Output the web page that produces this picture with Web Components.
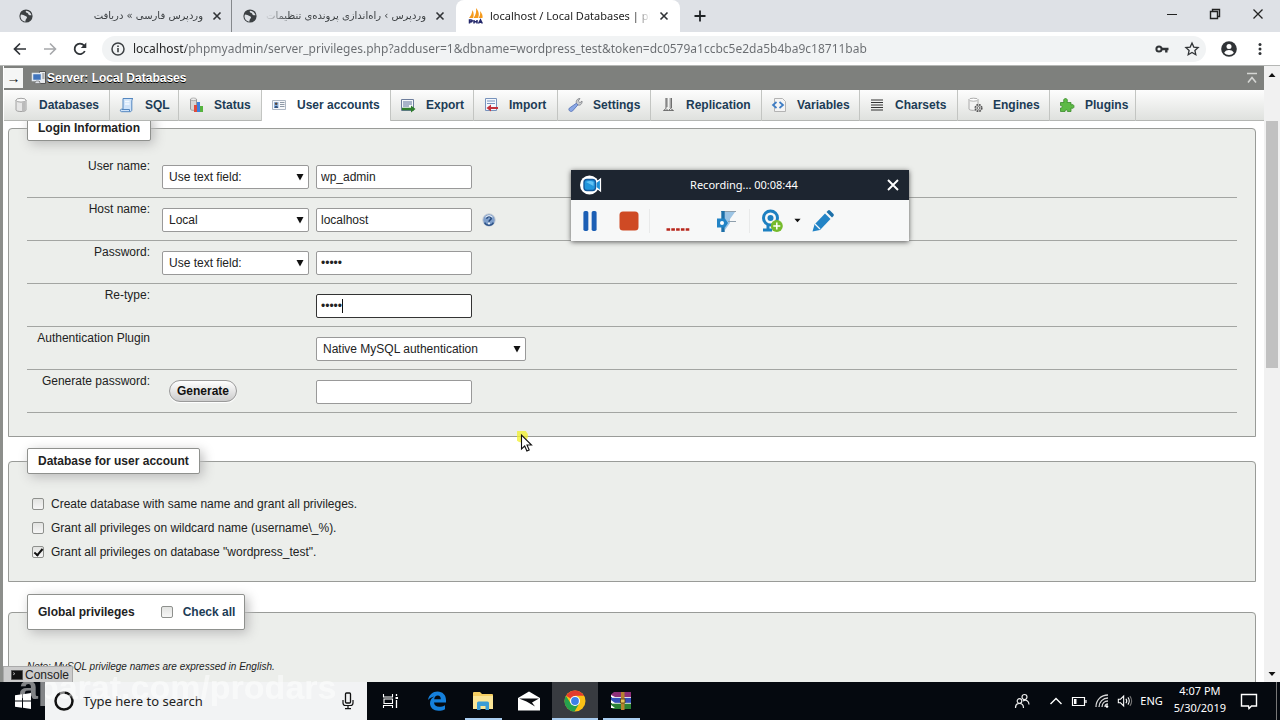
<!DOCTYPE html>
<html lang="en">
<head>
<meta charset="utf-8">
<title>localhost / Local Databases | phpMyAdmin</title>
<style>
html,body{margin:0;height:100%}
body{font:12px/16px "Liberation Sans",Arial,sans-serif;color:#222;overflow:hidden;background:#fff}
</style>
</head>
<body>
<desk-top></desk-top>
<script>
const ICONS = {
  globe:['0 0 16 16','<circle cx="8" cy="8" r="6.6" fill="#3c4043"/><path d="M3 6.5c2 0 3 1 4.500 1.500 1.500.5 2 1.500 1 2.500L7.500 12v1.600C4.500 13.500 2.500 11 2.500 8zM8 2.700c-1 1.300.5 2 1.500 2.300 1 .5.5 1.500 1.500 2s1.500 0 2.500.3C13 5 11 2.800 8 2.700z" fill="#dee1e6"/>'],
  close:['0 0 16 16','<path d="M4.500 4.500l7 7M11.500 4.500l-7 7" stroke="#303336" stroke-width="1.600"/>'],
  plus:['0 0 16 16','<path d="M8 2.500v11M2.500 8h11" stroke="#1f2326" stroke-width="1.800"/>'],
  pma:['0 0 16 16','<path d="M1 10C3 8 4 5 4.500 2 6 5 6 8 5 10zM5.500 10C8 7 8.500 3 8 0c3 3 3.500 7 2 10zM10.500 10c1.500-2 2-4 1.500-7 2 2 3 5 2.500 7z" fill="#f59a1c"/><path d="M1.500 15.500V12H3q1.500 0 1.200 1-.2 1-2.400 1M6 15.500V12M9 15.500V12M6 13.800h3M10.500 15.500l2-3.700 1.800 3.700M11.500 14.300h2.500" stroke="#24286b" stroke-width="1.500" fill="none"/>'],
  min:['0 0 16 16','<path d="M3 8.500h10" stroke="#222" stroke-width="1"/>'],
  restore:['0 0 16 16','<path d="M3.500 5.500h7v7h-7zM5.500 5V3.500h7v7H11" fill="none" stroke="#222" stroke-width="1.400"/>'],
  winclose:['0 0 16 16','<path d="M3.500 3.500l9 9M12.500 3.500l-9 9" stroke="#222" stroke-width="1.300"/>'],
  back:['0 0 16 16','<path d="M14 8H3M8 2.500L2.500 8 8 13.500" fill="none" stroke="#2f3337" stroke-width="1.700"/>'],
  fwd:['0 0 16 16','<path d="M2 8h11M8 2.500L13.500 8 8 13.500" fill="none" stroke="#a6a8ab" stroke-width="1.600"/>'],
  reload:['0 0 16 16','<path d="M12.800 10A5.300 5.300 0 1 1 12 4.400L13 5.500" fill="none" stroke="#2f3337" stroke-width="1.800"/><path d="M14.300 1.500v5.500H8.800z" fill="#2f3337"/>'],
  info:['0 0 16 16','<circle cx="8" cy="8" r="6" fill="none" stroke="#3c4043" stroke-width="1.500"/><path d="M8 7v4.300M8 4.500v1.600" stroke="#3c4043" stroke-width="1.600"/>'],
  key:['0 0 16 16','<circle cx="5" cy="8" r="2.600" fill="none" stroke="#303336" stroke-width="2"/><path d="M7.500 6.800h7v2.400h-1v2.300h-2.400V9.200H7.500z" fill="#303336"/>'],
  star:['0 0 16 16','<path d="M8 2l1.800 4.100 4.300.4-3.200 2.900.9 4.300L8 11.500l-3.800 2.200.9-4.300L1.900 6.500l4.300-.4z" fill="none" stroke="#303336" stroke-width="1.300"/>'],
  user:['0 0 18 18','<circle cx="9" cy="9" r="7.800" fill="#303336"/><circle cx="9" cy="6.600" r="2.500" fill="#fff"/><path d="M4.200 12.800c1-2.200 3-2.800 4.800-2.800s3.800.6 4.800 2.800c-2.500 2.900-7.100 2.900-9.600 0z" fill="#fff"/>'],
  dots:['0 0 16 16','<g fill="#303336"><circle cx="8" cy="3.500" r="1.500"/><circle cx="8" cy="8" r="1.500"/><circle cx="8" cy="12.500" r="1.500"/></g>'],
  server:['0 0 16 16','<path d="M8.500 1.500h6v12h-6z" fill="#e8eaec" stroke="#555"/><path d="M10 4h3.500M10 6h3.500M10 8h3.500" stroke="#777"/><path d="M1.500 3.500h9v7h-9z" fill="#4175bd" stroke="#e3eaf2" stroke-width="1.500"/><path d="M3.500 13.500h6L8 11H5z" fill="#dfe3e8" stroke="#666" stroke-width=".6"/>'],
  top:['0 0 16 16','<path d="M3 3.500h10M4 12.500l4-5 4 5" fill="none" stroke="#d5d6d4" stroke-width="1.600"/>'],
  db:['0 0 16 16','<path d="M3 3v10c0 2 10 2 10 0V3" fill="#e6e6e6" stroke="#9a9a9a" stroke-width=".9"/><ellipse cx="8" cy="3.200" rx="5" ry="1.900" fill="#fafafa" stroke="#9a9a9a" stroke-width=".9"/><path d="M9 5.500v9c2 0 3.500-.5 3.500-1.500V4.500z" fill="#bbb"/>'],
  sql:['0 0 16 16','<path d="M4 1.500h10c-1 .5-1.200 2-1.200 3.500v8c0 1-.8 1.700-1.800 1.700H2.500c-1.500 0-1.500-2.500 0-2.500H4z" fill="#cfe3f9" stroke="#5386bf"/><path d="M3 12.500h7.500v2" fill="none" stroke="#5386bf"/><path d="M6 4.500h4.500M6 7h4.500" stroke="#f4f9ff" stroke-width="1.300"/>'],
  status:['0 0 16 16','<path d="M2.500 2v10c0 1.800 6 1.800 6 0V2" fill="#d7d7d7" stroke="#999"/><ellipse cx="5.500" cy="2.300" rx="3" ry="1.300" fill="#eee" stroke="#999" stroke-width=".7"/><path d="M6 8h3v7H6z" fill="#e04b3c"/><path d="M9 5h3v10H9z" fill="#3f80dc"/><path d="M12 9h3v6h-3z" fill="#55b33e"/>'],
  users:['0 0 16 16','<path d="M1.500 3.500h13v9h-13z" fill="#f7f8fa" stroke="#aeb8c4"/><path d="M3 5h4.500v6H3z" fill="#8cb4e0"/><circle cx="5.200" cy="6.700" r="1.300" fill="#59463a"/><path d="M3.500 11c0-3 3.500-3 3.500 0z" fill="#33527d"/><path d="M9 5.500h4.500M9 7.500h4.500M9 9.500h4.500" stroke="#8e99a6"/>'],
  exp:['0 0 16 16','<path d="M1.500 2.500h12v11h-12z" fill="#f5f7fb" stroke="#6d7d9c"/><path d="M3 5h9M3 7h9M3 9h6" stroke="#5d7198"/><path d="M2 10.800h9V8.500l4.500 3.500-4.500 3.500v-2.300H2z" fill="#2f7d2d"/>'],
  imp:['0 0 16 16','<path d="M2.500 1.500h11v12h-11z" fill="#f3f7fd" stroke="#7893bc"/><path d="M4 4h8M4 6.500h8" stroke="#7893bc"/><path d="M15 10H8V7.500L3.500 11 8 14.500V12h7z" fill="#c3313b"/>'],
  wrench:['0 0 16 16','<path d="M9.500 6.500c-1-3 1-5 3.500-5l-1.700 2.500 1.700 1.700L15 4c.5 3-2 4.800-4 4z" fill="#c9cbce" stroke="#7c7f84" stroke-width=".8"/><path d="M9.300 6.300l1.600 1.600-5.300 6c-2 1.800-5-.8-3.200-2.800z" fill="#8aa8e6" stroke="#5470b2" stroke-width=".8"/>'],
  repl:['0 0 16 16','<path d="M6 1v10M10.500 1v10" stroke="#a6a6a6" stroke-width="2"/><path d="M7 1v9M11.500 1v10" stroke="#555" stroke-width=".8"/><path d="M3.500 13.500l2.500-2 2 2zM8.500 13.500l2-2 3 2z" fill="#e6e6e6" stroke="#555" stroke-width=".8"/>'],
  vars:['0 0 16 16','<path d="M3.500 1.500h8l3 3v10h-11z" fill="#f4f4f4" stroke="#b3b3b3"/><path d="M5.500 5l-3.500 3 3.500 3M8.500 5L12 8l-3.500 3" fill="none" stroke="#3d7cc4" stroke-width="1.700"/>'],
  lines:['0 0 16 16','<path d="M2 3h12M2 5.500h12M2 8h12M2 10.500h12M2 13h12" stroke="#333" stroke-width="1.200"/>'],
  engine:['0 0 16 16','<path d="M2 2.500v9.500c0 1.800 9 1.800 9 0V2.500" fill="#f2f2f2" stroke="#999" stroke-width=".8"/><ellipse cx="6.500" cy="2.700" rx="4.500" ry="1.500" fill="#fff" stroke="#999" stroke-width=".8"/><circle cx="11.500" cy="11" r="3.300" fill="#ccc" stroke="#555" stroke-width="1.600" stroke-dasharray="1.700 .9"/><circle cx="11.500" cy="11" r="1.300" fill="#fff" stroke="#555" stroke-width=".8"/>'],
  plug:['0 0 16 16','<path d="M1.500 5.500H5C4 3 5 1.500 6.500 1.500S9 3 8 5.500h4V8c2-1 3 0 3 1.500s-1 2.300-3 1.500v3.500H8.500c1-2-3-2-2.500 0H1.500V11c2 .7 2.500-3 0-2.500z" fill="#5dba46" stroke="#3a8b2a" stroke-width=".8"/>'],
  help:['0 0 16 16','<circle cx="8" cy="8" r="7" fill="#7f9fcb" stroke="#b9c1cd"/><path d="M3 11c2 4 8 4 10 0" fill="none" stroke="#2d5388" stroke-width="1.800"/><path d="M5.500 6.500C5.500 3 10.500 3 10.500 6.300 10.500 8 8 8 8 10" fill="none" stroke="#24487c" stroke-width="1.800"/><circle cx="8" cy="12" r="1.100" fill="#fff"/><path d="M4 5q4-4 8 0" fill="none" stroke="#e6eef8" stroke-width="1.200"/>'],
  arrow:['0 0 8 8','<path d="M.5 1h7L4 7.500z" fill="#111"/>'],
  up:['0 0 8 8','<path d="M.5 6L4 2l3.500 4z" fill="#111"/>'],
  down:['0 0 8 8','<path d="M.5 2h7L4 6z" fill="#111"/>'],
  term:['0 0 12 12','<path d="M.5 1.500h11v9H.5z" fill="#111" stroke="#555"/><path d="M2 3.500l2 1.200-2 1.200" fill="none" stroke="#ccc" stroke-width=".7"/>'],
  cam:['0 0 24 20','<circle cx="10.500" cy="10" r="9.500" fill="#fff"/><path d="M17 7.500L21.500 4v12L17 12.500z" fill="#1b8fd6" stroke="#fff" stroke-width="1.200"/><rect x="5" y="4.500" width="11.500" height="11" rx="3" fill="#2196dc" stroke="#155a9c" stroke-width="1.400"/><path d="M7 7q4-2 7.500 0v4z" fill="#62c3f5"/>'],
  recclose:['0 0 16 16','<path d="M3 3l10 10M13 3L3 13" stroke="#fff" stroke-width="1.900"/>'],
  pause:['0 0 20 20','<rect x="4" y="1" width="4.500" height="18" rx="1.500" fill="#1c5fb5"/><rect x="11.500" y="1" width="4.500" height="18" rx="1.500" fill="#1c5fb5"/>'],
  stop:['0 0 20 20','<rect x=".5" y=".5" width="19" height="19" rx="3.500" fill="#cf4a24"/>'],
  dash:['0 0 24 20','<path d="M.5 18.500h23" stroke="#b8261b" stroke-width="2.600" stroke-dasharray="3.600 1.200"/>'],
  hook:['0 0 22 24','<path d="M7 3h12l-5 7v4l-5 7z" fill="#9cc4e4"/><path d="M5 2.500h15M12 12.500h8" stroke="#8fa0ad"/><path d="M7 2v21" stroke="#1d70a9" stroke-width="3.400"/><path d="M1 9.500h8l3 4.500-3 4.500H1z" fill="#2384c6"/><circle cx="6" cy="14" r="2" fill="#fff"/>'],
  webcam:['0 0 24 24','<circle cx="10.500" cy="9" r="7" fill="none" stroke="#1d80c1" stroke-width="3"/><circle cx="10.500" cy="9" r="3" fill="#1d80c1"/><path d="M8 16v4M3 21h9" stroke="#1d80c1" stroke-width="3"/><circle cx="16.800" cy="17" r="6" fill="#76bb2c"/><path d="M16.800 13.500v7M13.300 17h7" stroke="#fff" stroke-width="1.500"/>'],
  pencil:['0 0 24 24','<path d="M1.500 22.500l2-7L14 4.500l5.500 5.500L9 21z" fill="#2384c6"/><path d="M15.500 3L17 1.500q1-.8 2 0L22.500 5q.8 1 0 2L21 8.500z" fill="#1d70a9"/><path d="M4 15l5 5" stroke="#f7f8f9" stroke-width="1.300"/>'],
  win:['0 0 16 16','<path d="M0 2.300L7 1.300v6.300H0zM8 1.200L16 0v7.600H8zM0 8.400h7v6.300l-7-1zM8 8.400h8V16l-8-1.200z" fill="#fff"/>'],
  ring:['0 0 20 20','<circle cx="10" cy="10" r="8.500" fill="none" stroke="#111" stroke-width="2.500"/>'],
  mic:['0 0 12 18','<rect x="3.500" y="1" width="5" height="10" rx="1" fill="none" stroke="#111" stroke-width="1.300"/><path d="M1 8v3q0 2.500 2.500 2.500h5Q11 13.500 11 11V8M6 13.500v3M3 16.700h6" fill="none" stroke="#111" stroke-width="1.200"/>'],
  view:['0 0 18 16','<path d="M1.500 1v3h9V1M2 6h8.500v4.500H2zM1.500 15v-2.500h9V15" fill="none" stroke="#fff" stroke-width="1.100"/><path d="M14.500 1v2M14.500 7v8" stroke="#fff" stroke-width="1.300"/><path d="M13.500 4h2.500v2h-2.500z" fill="#fff"/>'],
  edge:['0 0 20 20','<path d="M1 9C2 3.500 6 .5 10.500.5c5 0 8.500 3.500 8.500 8.500v2.500H7c.3 3 2.500 4.300 5.300 4.300 2.200 0 4-.6 5.700-1.600v4c-1.800 1-4 1.500-6.500 1.500C6.500 19.700 3 16.800 3 12.300c0-3 1.600-5.400 4.300-6.800C5 6 2.500 7 1 9zm6.200-.8h6.600c0-2.200-1-3.700-3-3.700-2.100 0-3.400 1.600-3.600 3.700z" fill="#1580dc"/>'],
  folder:['0 0 22 20','<path d="M1 2q0-1 1-1h6l2 2h10q1 0 1 1v13H1z" fill="#f5ce62"/><path d="M1 5h20v13H1z" fill="#fbe596"/><path d="M5 19v-7q0-1.500 1.500-1.500h9q1.500 0 1.500 1.500v7h-3.500v-4h-5v4z" fill="#3a9cd6"/>'],
  mail:['0 0 24 20','<path d="M1 7l11-6.500L23 7v12.500H1z" fill="#fff"/><path d="M2 7.500h20L15 11.500l3 4L9.500 10.500z" fill="#0a0c10"/>'],
  chrome:['0 0 22 22','<circle cx="11" cy="11" r="10.500" fill="#fbc116"/><path d="M11 11L2 5.700A10.500 10.500 0 0 1 20.100 5.700H11z" fill="#e33b2e"/><path d="M1.900 5.700A10.500 10.500 0 0 0 10.500 21.500L15.200 13.500 6.500 13z" fill="#26a14d"/><circle cx="11" cy="11" r="5" fill="#fff"/><circle cx="11" cy="11" r="3.900" fill="#3d7fe8"/>'],
  rar:['0 0 22 20','<path d="M1 3.500L4 1h17v5H1z" fill="#8e2f78"/><path d="M1 6h20v6H1z" fill="#3450b8"/><path d="M1 12h20v6H3L1 16z" fill="#2b8035"/><path d="M1 4l4 2H1zM1 9l4 3H1zM1 14l4 3H1z" fill="#fff"/><path d="M2 6.500h19M2 12.300h19" stroke="#eee" stroke-width=".9"/><path d="M11 1h3.500v18H11z" fill="#b6842d"/><path d="M10.500 8h4.500v4h-4.500z" fill="#e8c45a" stroke="#573b10" stroke-width=".8"/>'],
  people:['0 0 16 16','<circle cx="10.500" cy="4" r="2.500" fill="none" stroke="#eee" stroke-width="1.200"/><circle cx="5.500" cy="8" r="2.300" fill="none" stroke="#eee" stroke-width="1.200"/><path d="M1.500 15c0-6 8-6 8 0M9 8c3-2 6 0 6 3.500" fill="none" stroke="#eee" stroke-width="1.200"/>'],
  chev:['0 0 16 16','<path d="M2.500 11L8 5.500l5.500 5.500" fill="none" stroke="#fff" stroke-width="1.400"/>'],
  batt:['0 0 16 16','<path d="M1.500 4.500h12v8h-12zM15 7v3" fill="none" stroke="#fff" stroke-width="1.200"/><path d="M3 6h2.500v5H3z" fill="#fff"/>'],
  wifi:['0 0 16 16','<path d="M2 14C2 7 7 2 14 2M5 14c0-5 4-9 9-9M8 14c0-3.500 2.500-6 6-6M11 14c0-2 1-3 3-3" fill="none" stroke="#d8d8d8" stroke-width="1.300"/><circle cx="13" cy="13.500" r="1.300" fill="#fff"/>'],
  vol:['0 0 18 16','<path d="M1.500 6H4l3.500-3.500v11L4 10H1.500z" fill="none" stroke="#fff" stroke-width="1.200"/><path d="M10 5.500q2 2.500 0 5M12.300 4q3 4 0 8" fill="none" stroke="#fff" stroke-width="1.200"/><path d="M14.500 2.500q4 5.500 0 11" fill="none" stroke="#777" stroke-width="1.200"/>'],
  note:['0 0 18 18','<path d="M1.500 2.500h15v11.500h-5L9 16.500 8.500 14h-7z" fill="none" stroke="#fff" stroke-width="1.400"/>'],
  pointer:['0 0 20 26','<circle cx="4.500" cy="5" r="6.500" fill="#f2f02a" opacity=".75"/><path d="M4.500 4v14l3.200-3 2.200 5 2.300-1-2.200-5h4.500z" fill="#fff" stroke="#111" stroke-width="1.100"/>']
};

function define(name, html){
  const t = document.createElement('template');
  customElements.define(name, class extends HTMLElement{
    connectedCallback(){
      if(this.shadowRoot) return;
      t.innerHTML = typeof html === 'function' ? html(this) : html;
      this.attachShadow({mode:'open'}).append(t.content.cloneNode(true));
    }
  });
}
const ic = (name,w=16,h=w)=>`<ui-icon name="${name}" w="${w}" h="${h}"></ui-icon>`;

define('ui-icon', el=>{
  const [vb,body]=ICONS[el.getAttribute('name')];
  const w=el.getAttribute('w')||16, h=el.getAttribute('h')||w;
  return `<style>:host{display:inline-flex;flex:none}svg{display:block}</style><svg width="${w}" height="${h}" viewBox="${vb}" aria-hidden="true">${body}</svg>`;
});

define('browser-tab', el=>`<style>
:host{display:flex;align-items:center;box-sizing:border-box;width:224px;height:32px;padding:0 8px 0 10px;gap:6px;font:11px/16px "Noto Sans","DejaVu Sans",sans-serif;color:#3c4043}
:host([active]){background:#fff;border-radius:8px 8px 0 0;padding-left:12px;color:#222}
:host([divided]){border-right:1px solid #85888c;width:232px;padding:0 6px 0 18px}
span{flex:1;overflow:hidden;white-space:nowrap;-webkit-mask:linear-gradient(to right,#000 90%,transparent)}
:host([rtl]) span{direction:rtl;font-family:"DejaVu Sans",sans-serif;font-size:10px;-webkit-mask:linear-gradient(to left,#000 85%,transparent)}
button{border:0;background:none;padding:0;display:flex}
</style>${ic(el.getAttribute('icon'))}<span><slot></slot></span><button aria-label="Close tab">${ic('close')}</button>`);

define('browser-tabs', `<style>
:host{display:flex;align-items:center;height:32px;background:#dee1e6}
button{border:0;background:none;padding:0;display:flex}
.new{margin-left:12px}.win{margin-left:auto;display:flex;gap:27px;padding:0 14px 5px 0}
browser-tab{flex:0 1 auto}
</style>
<browser-tab icon="globe" rtl divided>وردپرس فارسی » دریافت</browser-tab>
<browser-tab icon="globe" rtl>وردپرس › راه‌اندازی پرونده‌ی تنظیمات</browser-tab>
<browser-tab icon="pma" active>localhost / Local Databases | phpMyAdmin</browser-tab>
<button class="new" aria-label="New tab">${ic('plus')}</button>
<div class="win"><button aria-label="Minimize">${ic('min')}</button><button aria-label="Restore">${ic('restore')}</button><button aria-label="Close">${ic('winclose')}</button></div>`);

define('browser-toolbar', `<style>
:host{display:flex;align-items:center;height:33px;padding:0 12px;gap:14px;background:#fff;border-bottom:1px solid #b5b7b5}
button{border:0;background:none;padding:0;display:flex}
.bar{flex:1;display:flex;align-items:center;height:26px;border-radius:13px;background:#f1f3f4;padding:0 6px 0 8px;gap:7px}
.nav{display:flex;gap:14px}
input{flex:1;min-width:0;font:12px/18px "Noto Sans",sans-serif;border:0;padding:0;outline:0;color:transparent;background:linear-gradient(to right,#222 53px,#696c70 53px);-webkit-background-clip:text;background-clip:text}
.act{display:flex;gap:14px}
</style>
<div class="nav"><button aria-label="Back">${ic('back')}</button><button aria-label="Forward">${ic('fwd')}</button><button aria-label="Reload">${ic('reload')}</button></div>
<div class="bar">${ic('info')}<input aria-label="Address" value="localhost/phpmyadmin/server_privileges.php?adduser=1&amp;dbname=wordpress_test&amp;token=dc0579a1ccbc5e2da5b4ba9c18711bab">
<div class="act"><button aria-label="Passwords">${ic('key')}</button><button aria-label="Bookmark">${ic('star')}</button></div></div>
<button aria-label="Profile">${ic('user',18)}</button><button aria-label="Menu">${ic('dots')}</button>`);

define('pma-header', `<style>
:host{display:flex;align-items:center;height:24px;background:#7e807d;padding:0 4px 0 0;color:#fff;font-weight:bold;text-shadow:0 1px 0 #000}
button{width:19px;height:20px;margin-right:8px;padding:0;border:0;background:#f5f6f5;color:#111;font:14px/20px "Liberation Sans",sans-serif}
a{color:#fff;text-decoration:none;margin-right:auto}
</style><button aria-label="Show panel">→</button>${ic('server')}<a href="#">Server: Local Databases</a>${ic('top')}`);

define('pma-tab', el=>`<style>
:host{display:block;border-right:1px solid #c3c5c2}
a{box-sizing:border-box;height:30px;display:flex;align-items:center;gap:10px;padding:0 9px;color:#1c3c56;text-decoration:none;font-weight:bold}
:host([active]) a{background:#fff;height:31px;padding-bottom:1px}
</style><a href="#">${ic(el.getAttribute('icon'))}<slot></slot></a>`);

define('pma-tabs', `<style>
:host{display:flex;height:31px;box-sizing:border-box;border-bottom:1px solid #b4b6b3;background:linear-gradient(#fdfdfd,#dfe1de);position:relative;z-index:1}
nav{display:grid;grid-template-columns:106px 69px 83px 129px 83px 84px 93px 111px 98px 98px 92px 86px}
</style><nav>
${[['db','Databases'],['sql','SQL'],['status','Status'],['users','User accounts'],['exp','Export'],['imp','Import'],['wrench','Settings'],['repl','Replication'],['vars','Variables'],['lines','Charsets'],['engine','Engines'],['plug','Plugins']].map(([i,t])=>`<pma-tab icon="${i}"${i=='users'?' active':''}>${t}</pma-tab>`).join('')}
</nav>`);

define('pma-fieldset', `<style>
:host{display:block}
fieldset{margin:0;border:1px solid #999b98;border-radius:4px 4px 0 0;background:#eceeeb;padding:0 18px;min-width:0}
legend{box-sizing:border-box;background:#fff;border:1px solid #8f918e;border-radius:2px;padding:3px 10px;color:#222;font-weight:bold;line-height:18px;box-shadow:3px 3px 12px #bbb}
:host([tall]) legend{padding:8px 9px 8px 10px}
</style><fieldset><legend><slot name="legend"></slot></legend><slot></slot></fieldset>`);

const select=(id,label,cls='')=>`<span class="sel ${cls}"><select id="${id}" aria-label="${label}"><option>${label}</option></select>${ic('arrow',8)}</span>`;
define('pma-login', `<style>
:host{display:block}
.rows{padding:14px 0 23px}
.row{display:grid;grid-template-columns:123px 142px 1fr;column-gap:12px;box-sizing:border-box;height:43px;border-bottom:1px solid #a3a5a2;align-items:start}
.row>label{text-align:right;padding-top:3px}
.ctl{margin-top:10px;display:flex;align-items:center;gap:10px}
input,select{box-sizing:border-box;font:inherit;color:#222;height:24px;border:1px solid #999;border-radius:2px;background:#fff;margin:0;outline:0}
input{width:156px;padding:0 4px}
.focus input{border-color:#333}
.sel,.focus{display:grid;align-items:center}
.sel>*,.focus>*{grid-area:1/1}
.sel select{appearance:none;width:147px;padding:0 6px}
.sel.wide select{width:210px}
.sel ui-icon{justify-self:end;margin-right:5px;pointer-events:none}
.caret{width:1px;height:14px;background:#111;margin-left:26px}
button{margin:0 0 0 7px;height:22px;padding:0 7px;border:1px solid #9a9a9a;border-radius:12px;background:linear-gradient(#fff,#ccc);font:bold 12px/18px "Liberation Sans",Arial,sans-serif;color:#111;box-shadow:0 1px 1px #fff}
</style>
<pma-fieldset><span slot="legend">Login Information</span>
<div class="rows">
<div class="row"><label for="u">User name:</label><div class="ctl">${select('us','Use text field:')}</div><div class="ctl"><input id="u" value="wp_admin"></div></div>
<div class="row"><label for="h">Host name:</label><div class="ctl">${select('hs','Local')}</div><div class="ctl"><input id="h" value="localhost">${ic('help',14)}</div></div>
<div class="row"><label for="p">Password:</label><div class="ctl">${select('ps','Use text field:')}</div><div class="ctl"><input id="p" type="password" value="12345"></div></div>
<div class="row"><label for="r">Re-type:</label><div></div><div class="ctl"><span class="focus"><input id="r" type="password" value="12345"><i class="caret"></i></span></div></div>
<div class="row"><label for="a">Authentication Plugin</label><div></div><div class="ctl">${select('a','Native MySQL authentication','wide')}</div></div>
<div class="row"><label for="g">Generate password:</label><div class="ctl"><button>Generate</button></div><div class="ctl"><input id="g"></div></div>
</div></pma-fieldset>`);

const box=`input[type=checkbox]{appearance:none;box-sizing:border-box;width:12px;height:12px;margin:0;border:1px solid #8e908d;border-radius:2px;background:linear-gradient(#e2e3e1,#f6f6f6);display:grid;place-items:center;flex:none}
input:checked::after{content:"";width:3px;height:7px;border:solid #111;border-width:0 2px 2px 0;transform:rotate(40deg);margin-top:-2px}`;
define('pma-database', `<style>:host{display:block}${box}
.list{padding:18px 0 17px 5px;display:grid;justify-items:start}
label{display:flex;align-items:center;gap:7px;height:24px}
</style>
<pma-fieldset><span slot="legend">Database for user account</span><div class="list">
<label><input type="checkbox">Create database with same name and grant all privileges.</label>
<label><input type="checkbox">Grant all privileges on wildcard name (username\\_%).</label>
<label><input type="checkbox" checked>Grant all privileges on database "wordpress_test".</label>
</div></pma-fieldset>`);

define('pma-global', `<style>:host{display:block}${box}
.l{display:flex;gap:26px}label{display:flex;gap:10px;align-items:center;color:#1c3c56}
p{margin:0;padding:29px 0 40px;font:italic 10px/16px "Liberation Sans",Arial,sans-serif}
</style>
<pma-fieldset tall><span slot="legend" class="l">Global privileges <label><input type="checkbox">Check all</label></span>
<p>Note: MySQL privilege names are expressed in English.</p></pma-fieldset>`);

define('pma-console', `<style>
:host{display:flex;align-items:center;gap:2px;box-sizing:border-box;height:16px;padding:0 3px 0 7px;background:#ccc;border:1px solid #aaa;border-bottom:0;color:#222}
</style>${ic('term',12)}<span>Console</span>`);

define('scroll-bar', `<style>
:host{display:flex;flex-direction:column;align-items:center;width:16px;background:#f1f1f1;padding:5px 0 4px;box-sizing:border-box}
.track{flex:1;align-self:stretch;padding:42px 2px 0;min-height:0}
.thumb{height:45%;background:#c1c1c1}
</style>${ic('up',8)}<div class="track"><div class="thumb"></div></div>${ic('down',8)}`);

define('screen-recorder', `<style>
:host{display:block;width:338px;background:#f7f8f8;box-shadow:0 1px 5px #555;font:11px/16px "Noto Sans",sans-serif}
header{display:flex;align-items:center;height:30px;padding:0 8px;background:#1d2530;color:#fff}
header span{flex:1;text-align:center}
button{border:0;background:none;padding:0;display:flex}
.bar{display:flex;align-items:center;height:41px;padding-left:8px}
.grp{display:flex;align-items:center;gap:18px;padding-right:10px}
.grp+.grp{border-left:1px solid #e9eaea;padding:0 11px 0 16px;gap:26px}
.grp.last{gap:10px;padding:0 0 0 10px}
</style><header>${ic('cam',24,20)}<span>Recording... 00:08:44</span><button aria-label="Close">${ic('recclose')}</button></header>
<div class="bar"><div class="grp"><button aria-label="Pause">${ic('pause',22)}</button><button aria-label="Stop">${ic('stop',20)}</button></div>
<div class="grp"><button aria-label="Level">${ic('dash',24,20)}</button><button aria-label="Annotate">${ic('hook',22,24)}</button></div>
<div class="grp last"><button aria-label="Webcam">${ic('webcam',24)}</button><button aria-label="More">${ic('down',7)}</button><button aria-label="Draw">${ic('pencil',24)}</button></div></div>`);

define('task-bar', `<style>
:host{position:relative;display:flex;align-items:stretch;height:38px;background:#05090f;color:#fff;font:11px/16px "Noto Sans",sans-serif}
button{border:0;background:none;padding:0;display:flex;align-items:center;justify-content:center;width:46px;box-sizing:border-box}
.start{width:45px}
.search{display:flex;align-items:center;width:322px;background:#f2f3f4;padding:0 13px 0 9px;box-sizing:border-box;gap:9px;margin-right:1px}
.search input{flex:1;min-width:0;border:0;background:none;outline:0;padding:0;font:13px/18px "Noto Sans",sans-serif;color:#222}
.search input::placeholder{color:#222}
.open{background:linear-gradient(#a9cdf0,#a9cdf0) bottom/37px 2px no-repeat}
.cur{background:linear-gradient(#a9cdf0,#a9cdf0) bottom/46px 2px no-repeat #383b40}
.tray{margin-left:auto;display:flex;align-items:center;gap:7px}
.people{margin-right:11px;display:flex}
.time{text-align:center;line-height:17px;margin:0 7px 4px 4px}
.end{width:1px;align-self:stretch;background:#777;margin:0 3px 0 11px}
.mark{position:absolute;left:19px;top:-12px;font:bold 34px/34px "Liberation Sans",Arial,sans-serif;color:#fff;opacity:.5;pointer-events:none}
</style>
<button class="start" aria-label="Start">${ic('win')}</button>
<div class="search">${ic('ring',20)}<input aria-label="Search" placeholder="Type here to search">${ic('mic',12,18)}</div>
<button aria-label="Task view">${ic('view',18,16)}</button><button aria-label="Edge">${ic('edge',20)}</button><button class="open" aria-label="Explorer">${ic('folder',22,20)}</button><button aria-label="Mail">${ic('mail',24,20)}</button><button class="cur" aria-label="Chrome">${ic('chrome',22)}</button><button class="open" aria-label="WinRAR">${ic('rar',22,20)}</button>
<div class="tray"><span class="people">${ic('people')}</span>${ic('chev')}${ic('batt')}${ic('wifi')}${ic('vol')}<span>ENG</span><div class="time">4:07 PM<br>5/30/2019</div>${ic('note',18)}<i class="end"></i></div>
<span class="mark">aparat.com/prodars</span>`);

define('desk-top', `<style>
:host{display:flex;flex-direction:column;height:100vh;position:relative}
.page{flex:1;display:flex;min-height:0}
.side{width:3px;background:#8c8e8b}
.content{flex:1;min-width:0;display:flex;flex-direction:column;overflow:hidden;position:relative;padding-left:1px}
main{flex:1;min-height:0;padding:0 8px 0 4px;margin-top:-6px}
pma-login{margin-bottom:11px}pma-database{margin-bottom:12px}
pma-console{position:absolute;left:0;bottom:0;z-index:2}
screen-recorder{position:absolute;left:571px;top:170px;z-index:3}
.ptr{position:absolute;left:517px;top:431px;z-index:3}
</style>
<browser-tabs></browser-tabs><browser-toolbar></browser-toolbar>
<div class="page"><div class="side"></div><div class="content"><pma-header></pma-header><pma-tabs></pma-tabs>
<main><pma-login></pma-login><pma-database></pma-database><pma-global></pma-global></main>
<pma-console></pma-console></div><scroll-bar></scroll-bar></div>
<task-bar></task-bar>
<screen-recorder></screen-recorder><div class="ptr">${ic('pointer',20,26)}</div>`);
</script>
</body>
</html>
